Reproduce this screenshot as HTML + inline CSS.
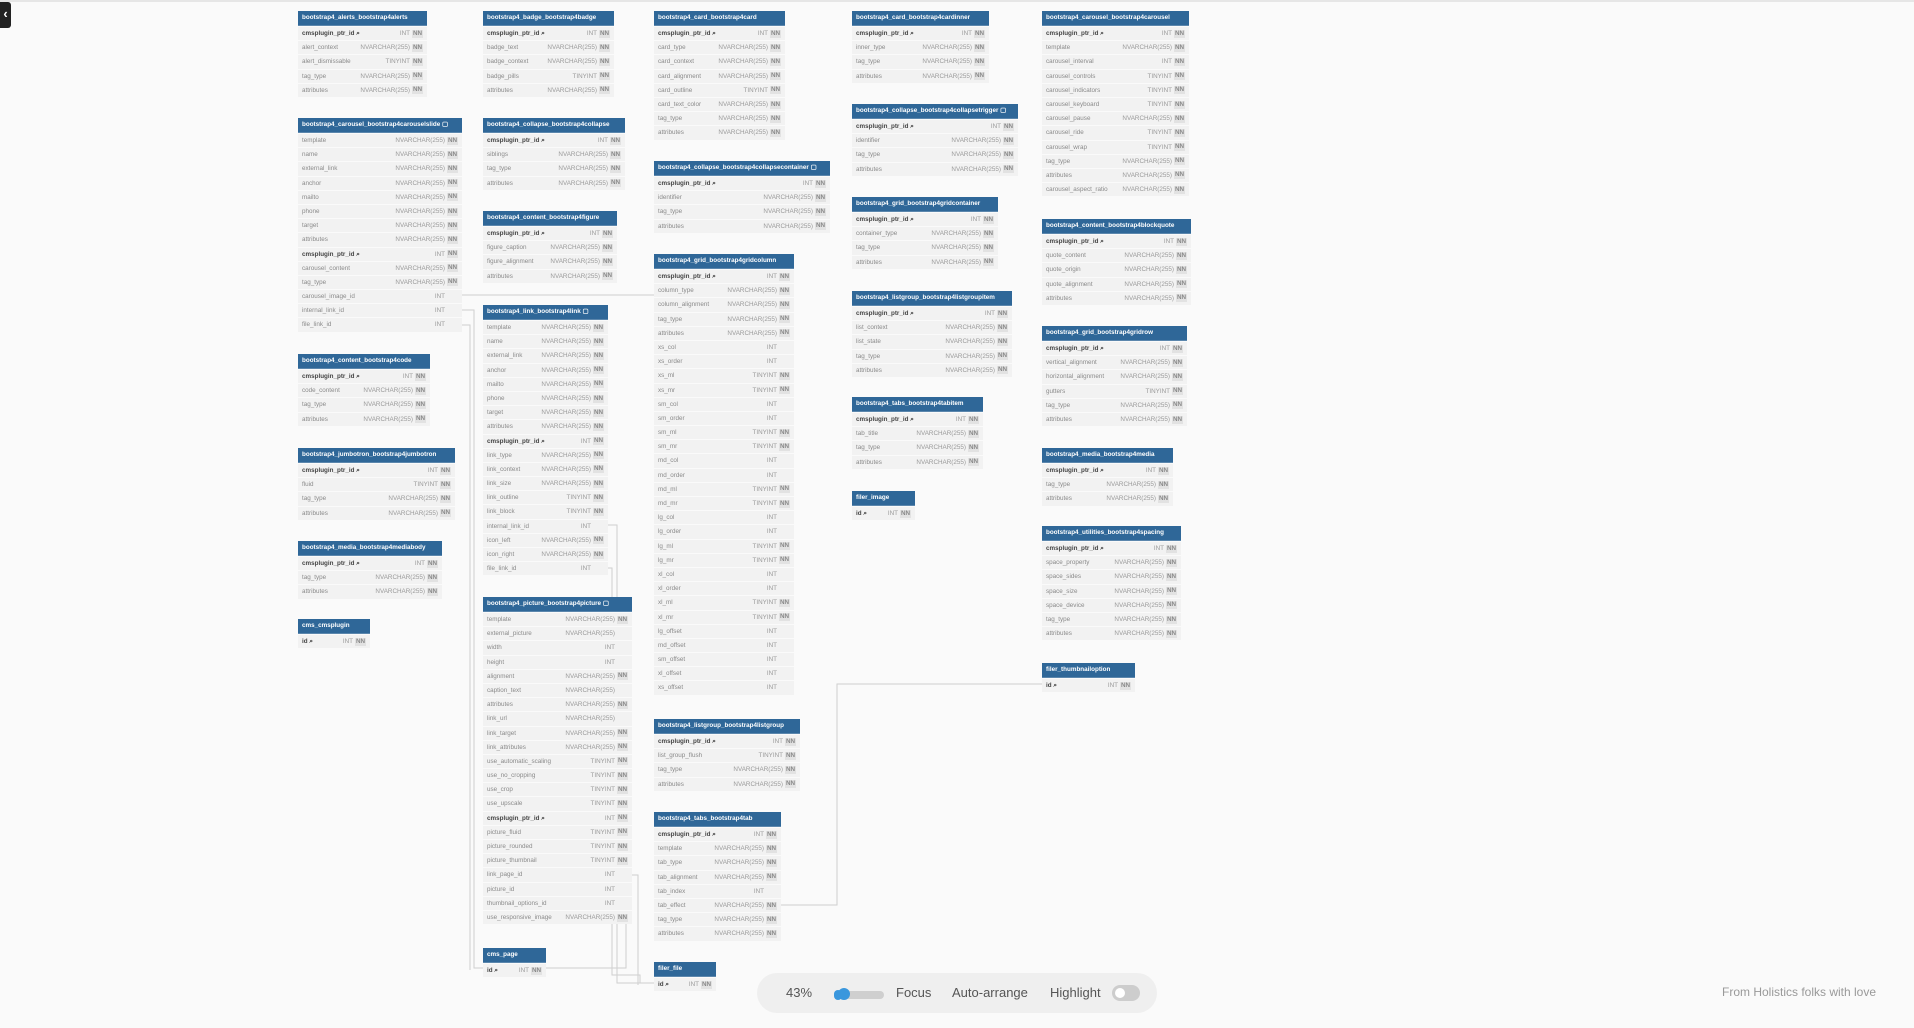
<!DOCTYPE html>
<html><head><meta charset="utf-8"><style>
body{margin:0;width:1914px;height:1028px;background:#fafafa;position:relative;overflow:hidden;font-family:"Liberation Sans",sans-serif}
.t{position:absolute;background:#f2f2f2;font-size:6.3px;color:#8a8a8a}
.h{background:#2f6798;color:#fff;font-weight:bold;height:14px;line-height:14px;padding-left:4px;white-space:nowrap;overflow:hidden;border-bottom:1px solid #5c87ad}
.r{height:13.2px;line-height:13.2px;border-top:1px solid #fafafa;display:flex;padding:0 4px;white-space:nowrap}
.r i{font-style:normal;flex:1}
.r b{font-weight:normal;color:#999}
.r s{text-decoration:none;background:#e2e2e2;color:#888;margin-left:2px;padding:0 1px;font-weight:bold;width:9px;text-align:center;height:8px;line-height:8px;align-self:center}
.r s.e{background:none}
.k i{color:#444;font-weight:bold}
.bar{position:absolute;left:757px;top:973px;width:400px;height:40px;background:#efefef;border-radius:20px;font-size:13px;color:#555}
.bar span{position:absolute;top:12px}
</style></head><body>
<div style="position:absolute;left:0;top:0;width:1914px;height:2px;background:#e6e6e6"></div>
<svg style="position:absolute;left:0;top:0" width="1914" height="1028"><g fill="none" stroke="#cfcfcf" stroke-width="1">
<polyline points="781,905 837,905 837,684 1042,684"/>
<polyline points="461,295 654,295"/>
<polyline points="462,310 474,310 474,968 483,968"/>
<polyline points="462,325 470,325 470,970"/>
<polyline points="608,525 617,525 617,983 654,983"/>
<polyline points="608,568 612,568 612,975 640,975 640,983"/>
<polyline points="632,875 638,875 638,985"/>
<polyline points="632,904 626,904 626,968 546,968"/>
</g></svg>
<div style="position:absolute;left:0;top:2px;width:11px;height:26px;background:#222;border-radius:0 3px 3px 0;color:#fff;font-size:13px;font-weight:bold;line-height:24px;text-align:center">‹</div>

<!-- col1 -->
<div class="t" style="left:298px;top:11px;width:129px"><div class="h">bootstrap4_alerts_bootstrap4alerts</div>
<div class="r k"><i>cmsplugin_ptr_id ⌕</i><b>INT</b><s>NN</s></div>
<div class="r"><i>alert_context</i><b>NVARCHAR(255)</b><s>NN</s></div>
<div class="r"><i>alert_dismissable</i><b>TINYINT</b><s>NN</s></div>
<div class="r"><i>tag_type</i><b>NVARCHAR(255)</b><s>NN</s></div>
<div class="r"><i>attributes</i><b>NVARCHAR(255)</b><s>NN</s></div></div>

<div class="t" style="left:298px;top:118px;width:164px"><div class="h">bootstrap4_carousel_bootstrap4carouselslide ▢</div>
<div class="r"><i>template</i><b>NVARCHAR(255)</b><s>NN</s></div>
<div class="r"><i>name</i><b>NVARCHAR(255)</b><s>NN</s></div>
<div class="r"><i>external_link</i><b>NVARCHAR(255)</b><s>NN</s></div>
<div class="r"><i>anchor</i><b>NVARCHAR(255)</b><s>NN</s></div>
<div class="r"><i>mailto</i><b>NVARCHAR(255)</b><s>NN</s></div>
<div class="r"><i>phone</i><b>NVARCHAR(255)</b><s>NN</s></div>
<div class="r"><i>target</i><b>NVARCHAR(255)</b><s>NN</s></div>
<div class="r"><i>attributes</i><b>NVARCHAR(255)</b><s>NN</s></div>
<div class="r k"><i>cmsplugin_ptr_id ⌕</i><b>INT</b><s>NN</s></div>
<div class="r"><i>carousel_content</i><b>NVARCHAR(255)</b><s>NN</s></div>
<div class="r"><i>tag_type</i><b>NVARCHAR(255)</b><s>NN</s></div>
<div class="r"><i>carousel_image_id</i><b>INT</b><s class="e"></s></div>
<div class="r"><i>internal_link_id</i><b>INT</b><s class="e"></s></div>
<div class="r"><i>file_link_id</i><b>INT</b><s class="e"></s></div></div>

<div class="t" style="left:298px;top:354px;width:132px"><div class="h">bootstrap4_content_bootstrap4code</div>
<div class="r k"><i>cmsplugin_ptr_id ⌕</i><b>INT</b><s>NN</s></div>
<div class="r"><i>code_content</i><b>NVARCHAR(255)</b><s>NN</s></div>
<div class="r"><i>tag_type</i><b>NVARCHAR(255)</b><s>NN</s></div>
<div class="r"><i>attributes</i><b>NVARCHAR(255)</b><s>NN</s></div></div>

<div class="t" style="left:298px;top:448px;width:157px"><div class="h">bootstrap4_jumbotron_bootstrap4jumbotron</div>
<div class="r k"><i>cmsplugin_ptr_id ⌕</i><b>INT</b><s>NN</s></div>
<div class="r"><i>fluid</i><b>TINYINT</b><s>NN</s></div>
<div class="r"><i>tag_type</i><b>NVARCHAR(255)</b><s>NN</s></div>
<div class="r"><i>attributes</i><b>NVARCHAR(255)</b><s>NN</s></div></div>

<div class="t" style="left:298px;top:541px;width:144px"><div class="h">bootstrap4_media_bootstrap4mediabody</div>
<div class="r k"><i>cmsplugin_ptr_id ⌕</i><b>INT</b><s>NN</s></div>
<div class="r"><i>tag_type</i><b>NVARCHAR(255)</b><s>NN</s></div>
<div class="r"><i>attributes</i><b>NVARCHAR(255)</b><s>NN</s></div></div>

<div class="t" style="left:298px;top:619px;width:72px"><div class="h">cms_cmsplugin</div>
<div class="r k"><i>id ⌕</i><b>INT</b><s>NN</s></div></div>

<!-- col2 -->
<div class="t" style="left:483px;top:11px;width:131px"><div class="h">bootstrap4_badge_bootstrap4badge</div>
<div class="r k"><i>cmsplugin_ptr_id ⌕</i><b>INT</b><s>NN</s></div>
<div class="r"><i>badge_text</i><b>NVARCHAR(255)</b><s>NN</s></div>
<div class="r"><i>badge_context</i><b>NVARCHAR(255)</b><s>NN</s></div>
<div class="r"><i>badge_pills</i><b>TINYINT</b><s>NN</s></div>
<div class="r"><i>attributes</i><b>NVARCHAR(255)</b><s>NN</s></div></div>

<div class="t" style="left:483px;top:118px;width:142px"><div class="h">bootstrap4_collapse_bootstrap4collapse</div>
<div class="r k"><i>cmsplugin_ptr_id ⌕</i><b>INT</b><s>NN</s></div>
<div class="r"><i>siblings</i><b>NVARCHAR(255)</b><s>NN</s></div>
<div class="r"><i>tag_type</i><b>NVARCHAR(255)</b><s>NN</s></div>
<div class="r"><i>attributes</i><b>NVARCHAR(255)</b><s>NN</s></div></div>

<div class="t" style="left:483px;top:211px;width:134px"><div class="h">bootstrap4_content_bootstrap4figure</div>
<div class="r k"><i>cmsplugin_ptr_id ⌕</i><b>INT</b><s>NN</s></div>
<div class="r"><i>figure_caption</i><b>NVARCHAR(255)</b><s>NN</s></div>
<div class="r"><i>figure_alignment</i><b>NVARCHAR(255)</b><s>NN</s></div>
<div class="r"><i>attributes</i><b>NVARCHAR(255)</b><s>NN</s></div></div>

<div class="t" style="left:483px;top:305px;width:125px"><div class="h">bootstrap4_link_bootstrap4link ▢</div>
<div class="r"><i>template</i><b>NVARCHAR(255)</b><s>NN</s></div>
<div class="r"><i>name</i><b>NVARCHAR(255)</b><s>NN</s></div>
<div class="r"><i>external_link</i><b>NVARCHAR(255)</b><s>NN</s></div>
<div class="r"><i>anchor</i><b>NVARCHAR(255)</b><s>NN</s></div>
<div class="r"><i>mailto</i><b>NVARCHAR(255)</b><s>NN</s></div>
<div class="r"><i>phone</i><b>NVARCHAR(255)</b><s>NN</s></div>
<div class="r"><i>target</i><b>NVARCHAR(255)</b><s>NN</s></div>
<div class="r"><i>attributes</i><b>NVARCHAR(255)</b><s>NN</s></div>
<div class="r k"><i>cmsplugin_ptr_id ⌕</i><b>INT</b><s>NN</s></div>
<div class="r"><i>link_type</i><b>NVARCHAR(255)</b><s>NN</s></div>
<div class="r"><i>link_context</i><b>NVARCHAR(255)</b><s>NN</s></div>
<div class="r"><i>link_size</i><b>NVARCHAR(255)</b><s>NN</s></div>
<div class="r"><i>link_outline</i><b>TINYINT</b><s>NN</s></div>
<div class="r"><i>link_block</i><b>TINYINT</b><s>NN</s></div>
<div class="r"><i>internal_link_id</i><b>INT</b><s class="e"></s></div>
<div class="r"><i>icon_left</i><b>NVARCHAR(255)</b><s>NN</s></div>
<div class="r"><i>icon_right</i><b>NVARCHAR(255)</b><s>NN</s></div>
<div class="r"><i>file_link_id</i><b>INT</b><s class="e"></s></div></div>

<div class="t" style="left:483px;top:597px;width:149px"><div class="h">bootstrap4_picture_bootstrap4picture ▢</div>
<div class="r"><i>template</i><b>NVARCHAR(255)</b><s>NN</s></div>
<div class="r"><i>external_picture</i><b>NVARCHAR(255)</b><s class="e"></s></div>
<div class="r"><i>width</i><b>INT</b><s class="e"></s></div>
<div class="r"><i>height</i><b>INT</b><s class="e"></s></div>
<div class="r"><i>alignment</i><b>NVARCHAR(255)</b><s>NN</s></div>
<div class="r"><i>caption_text</i><b>NVARCHAR(255)</b><s class="e"></s></div>
<div class="r"><i>attributes</i><b>NVARCHAR(255)</b><s>NN</s></div>
<div class="r"><i>link_url</i><b>NVARCHAR(255)</b><s class="e"></s></div>
<div class="r"><i>link_target</i><b>NVARCHAR(255)</b><s>NN</s></div>
<div class="r"><i>link_attributes</i><b>NVARCHAR(255)</b><s>NN</s></div>
<div class="r"><i>use_automatic_scaling</i><b>TINYINT</b><s>NN</s></div>
<div class="r"><i>use_no_cropping</i><b>TINYINT</b><s>NN</s></div>
<div class="r"><i>use_crop</i><b>TINYINT</b><s>NN</s></div>
<div class="r"><i>use_upscale</i><b>TINYINT</b><s>NN</s></div>
<div class="r k"><i>cmsplugin_ptr_id ⌕</i><b>INT</b><s>NN</s></div>
<div class="r"><i>picture_fluid</i><b>TINYINT</b><s>NN</s></div>
<div class="r"><i>picture_rounded</i><b>TINYINT</b><s>NN</s></div>
<div class="r"><i>picture_thumbnail</i><b>TINYINT</b><s>NN</s></div>
<div class="r"><i>link_page_id</i><b>INT</b><s class="e"></s></div>
<div class="r"><i>picture_id</i><b>INT</b><s class="e"></s></div>
<div class="r"><i>thumbnail_options_id</i><b>INT</b><s class="e"></s></div>
<div class="r"><i>use_responsive_image</i><b>NVARCHAR(255)</b><s>NN</s></div></div>

<div class="t" style="left:483px;top:948px;width:63px"><div class="h">cms_page</div>
<div class="r k"><i>id ⌕</i><b>INT</b><s>NN</s></div></div>

<!-- col3 -->
<div class="t" style="left:654px;top:11px;width:131px"><div class="h">bootstrap4_card_bootstrap4card</div>
<div class="r k"><i>cmsplugin_ptr_id ⌕</i><b>INT</b><s>NN</s></div>
<div class="r"><i>card_type</i><b>NVARCHAR(255)</b><s>NN</s></div>
<div class="r"><i>card_context</i><b>NVARCHAR(255)</b><s>NN</s></div>
<div class="r"><i>card_alignment</i><b>NVARCHAR(255)</b><s>NN</s></div>
<div class="r"><i>card_outline</i><b>TINYINT</b><s>NN</s></div>
<div class="r"><i>card_text_color</i><b>NVARCHAR(255)</b><s>NN</s></div>
<div class="r"><i>tag_type</i><b>NVARCHAR(255)</b><s>NN</s></div>
<div class="r"><i>attributes</i><b>NVARCHAR(255)</b><s>NN</s></div></div>

<div class="t" style="left:654px;top:161px;width:176px"><div class="h">bootstrap4_collapse_bootstrap4collapsecontainer ▢</div>
<div class="r k"><i>cmsplugin_ptr_id ⌕</i><b>INT</b><s>NN</s></div>
<div class="r"><i>identifier</i><b>NVARCHAR(255)</b><s>NN</s></div>
<div class="r"><i>tag_type</i><b>NVARCHAR(255)</b><s>NN</s></div>
<div class="r"><i>attributes</i><b>NVARCHAR(255)</b><s>NN</s></div></div>

<div class="t" style="left:654px;top:254px;width:140px"><div class="h">bootstrap4_grid_bootstrap4gridcolumn</div>
<div class="r k"><i>cmsplugin_ptr_id ⌕</i><b>INT</b><s>NN</s></div>
<div class="r"><i>column_type</i><b>NVARCHAR(255)</b><s>NN</s></div>
<div class="r"><i>column_alignment</i><b>NVARCHAR(255)</b><s>NN</s></div>
<div class="r"><i>tag_type</i><b>NVARCHAR(255)</b><s>NN</s></div>
<div class="r"><i>attributes</i><b>NVARCHAR(255)</b><s>NN</s></div>
<div class="r"><i>xs_col</i><b>INT</b><s class="e"></s></div>
<div class="r"><i>xs_order</i><b>INT</b><s class="e"></s></div>
<div class="r"><i>xs_ml</i><b>TINYINT</b><s>NN</s></div>
<div class="r"><i>xs_mr</i><b>TINYINT</b><s>NN</s></div>
<div class="r"><i>sm_col</i><b>INT</b><s class="e"></s></div>
<div class="r"><i>sm_order</i><b>INT</b><s class="e"></s></div>
<div class="r"><i>sm_ml</i><b>TINYINT</b><s>NN</s></div>
<div class="r"><i>sm_mr</i><b>TINYINT</b><s>NN</s></div>
<div class="r"><i>md_col</i><b>INT</b><s class="e"></s></div>
<div class="r"><i>md_order</i><b>INT</b><s class="e"></s></div>
<div class="r"><i>md_ml</i><b>TINYINT</b><s>NN</s></div>
<div class="r"><i>md_mr</i><b>TINYINT</b><s>NN</s></div>
<div class="r"><i>lg_col</i><b>INT</b><s class="e"></s></div>
<div class="r"><i>lg_order</i><b>INT</b><s class="e"></s></div>
<div class="r"><i>lg_ml</i><b>TINYINT</b><s>NN</s></div>
<div class="r"><i>lg_mr</i><b>TINYINT</b><s>NN</s></div>
<div class="r"><i>xl_col</i><b>INT</b><s class="e"></s></div>
<div class="r"><i>xl_order</i><b>INT</b><s class="e"></s></div>
<div class="r"><i>xl_ml</i><b>TINYINT</b><s>NN</s></div>
<div class="r"><i>xl_mr</i><b>TINYINT</b><s>NN</s></div>
<div class="r"><i>lg_offset</i><b>INT</b><s class="e"></s></div>
<div class="r"><i>md_offset</i><b>INT</b><s class="e"></s></div>
<div class="r"><i>sm_offset</i><b>INT</b><s class="e"></s></div>
<div class="r"><i>xl_offset</i><b>INT</b><s class="e"></s></div>
<div class="r"><i>xs_offset</i><b>INT</b><s class="e"></s></div></div>

<div class="t" style="left:654px;top:719px;width:146px"><div class="h">bootstrap4_listgroup_bootstrap4listgroup</div>
<div class="r k"><i>cmsplugin_ptr_id ⌕</i><b>INT</b><s>NN</s></div>
<div class="r"><i>list_group_flush</i><b>TINYINT</b><s>NN</s></div>
<div class="r"><i>tag_type</i><b>NVARCHAR(255)</b><s>NN</s></div>
<div class="r"><i>attributes</i><b>NVARCHAR(255)</b><s>NN</s></div></div>

<div class="t" style="left:654px;top:812px;width:127px"><div class="h">bootstrap4_tabs_bootstrap4tab</div>
<div class="r k"><i>cmsplugin_ptr_id ⌕</i><b>INT</b><s>NN</s></div>
<div class="r"><i>template</i><b>NVARCHAR(255)</b><s>NN</s></div>
<div class="r"><i>tab_type</i><b>NVARCHAR(255)</b><s>NN</s></div>
<div class="r"><i>tab_alignment</i><b>NVARCHAR(255)</b><s>NN</s></div>
<div class="r"><i>tab_index</i><b>INT</b><s class="e"></s></div>
<div class="r"><i>tab_effect</i><b>NVARCHAR(255)</b><s>NN</s></div>
<div class="r"><i>tag_type</i><b>NVARCHAR(255)</b><s>NN</s></div>
<div class="r"><i>attributes</i><b>NVARCHAR(255)</b><s>NN</s></div></div>

<div class="t" style="left:654px;top:962px;width:62px"><div class="h">filer_file</div>
<div class="r k"><i>id ⌕</i><b>INT</b><s>NN</s></div></div>

<!-- col4 -->
<div class="t" style="left:852px;top:11px;width:137px"><div class="h">bootstrap4_card_bootstrap4cardinner</div>
<div class="r k"><i>cmsplugin_ptr_id ⌕</i><b>INT</b><s>NN</s></div>
<div class="r"><i>inner_type</i><b>NVARCHAR(255)</b><s>NN</s></div>
<div class="r"><i>tag_type</i><b>NVARCHAR(255)</b><s>NN</s></div>
<div class="r"><i>attributes</i><b>NVARCHAR(255)</b><s>NN</s></div></div>

<div class="t" style="left:852px;top:104px;width:166px"><div class="h">bootstrap4_collapse_bootstrap4collapsetrigger ▢</div>
<div class="r k"><i>cmsplugin_ptr_id ⌕</i><b>INT</b><s>NN</s></div>
<div class="r"><i>identifier</i><b>NVARCHAR(255)</b><s>NN</s></div>
<div class="r"><i>tag_type</i><b>NVARCHAR(255)</b><s>NN</s></div>
<div class="r"><i>attributes</i><b>NVARCHAR(255)</b><s>NN</s></div></div>

<div class="t" style="left:852px;top:197px;width:146px"><div class="h">bootstrap4_grid_bootstrap4gridcontainer</div>
<div class="r k"><i>cmsplugin_ptr_id ⌕</i><b>INT</b><s>NN</s></div>
<div class="r"><i>container_type</i><b>NVARCHAR(255)</b><s>NN</s></div>
<div class="r"><i>tag_type</i><b>NVARCHAR(255)</b><s>NN</s></div>
<div class="r"><i>attributes</i><b>NVARCHAR(255)</b><s>NN</s></div></div>

<div class="t" style="left:852px;top:291px;width:160px"><div class="h">bootstrap4_listgroup_bootstrap4listgroupitem</div>
<div class="r k"><i>cmsplugin_ptr_id ⌕</i><b>INT</b><s>NN</s></div>
<div class="r"><i>list_context</i><b>NVARCHAR(255)</b><s>NN</s></div>
<div class="r"><i>list_state</i><b>NVARCHAR(255)</b><s>NN</s></div>
<div class="r"><i>tag_type</i><b>NVARCHAR(255)</b><s>NN</s></div>
<div class="r"><i>attributes</i><b>NVARCHAR(255)</b><s>NN</s></div></div>

<div class="t" style="left:852px;top:397px;width:131px"><div class="h">bootstrap4_tabs_bootstrap4tabitem</div>
<div class="r k"><i>cmsplugin_ptr_id ⌕</i><b>INT</b><s>NN</s></div>
<div class="r"><i>tab_title</i><b>NVARCHAR(255)</b><s>NN</s></div>
<div class="r"><i>tag_type</i><b>NVARCHAR(255)</b><s>NN</s></div>
<div class="r"><i>attributes</i><b>NVARCHAR(255)</b><s>NN</s></div></div>

<div class="t" style="left:852px;top:491px;width:63px"><div class="h">filer_image</div>
<div class="r k"><i>id ⌕</i><b>INT</b><s>NN</s></div></div>

<!-- col5 -->
<div class="t" style="left:1042px;top:11px;width:147px"><div class="h">bootstrap4_carousel_bootstrap4carousel</div>
<div class="r k"><i>cmsplugin_ptr_id ⌕</i><b>INT</b><s>NN</s></div>
<div class="r"><i>template</i><b>NVARCHAR(255)</b><s>NN</s></div>
<div class="r"><i>carousel_interval</i><b>INT</b><s>NN</s></div>
<div class="r"><i>carousel_controls</i><b>TINYINT</b><s>NN</s></div>
<div class="r"><i>carousel_indicators</i><b>TINYINT</b><s>NN</s></div>
<div class="r"><i>carousel_keyboard</i><b>TINYINT</b><s>NN</s></div>
<div class="r"><i>carousel_pause</i><b>NVARCHAR(255)</b><s>NN</s></div>
<div class="r"><i>carousel_ride</i><b>TINYINT</b><s>NN</s></div>
<div class="r"><i>carousel_wrap</i><b>TINYINT</b><s>NN</s></div>
<div class="r"><i>tag_type</i><b>NVARCHAR(255)</b><s>NN</s></div>
<div class="r"><i>attributes</i><b>NVARCHAR(255)</b><s>NN</s></div>
<div class="r"><i>carousel_aspect_ratio</i><b>NVARCHAR(255)</b><s>NN</s></div></div>

<div class="t" style="left:1042px;top:219px;width:149px"><div class="h">bootstrap4_content_bootstrap4blockquote</div>
<div class="r k"><i>cmsplugin_ptr_id ⌕</i><b>INT</b><s>NN</s></div>
<div class="r"><i>quote_content</i><b>NVARCHAR(255)</b><s>NN</s></div>
<div class="r"><i>quote_origin</i><b>NVARCHAR(255)</b><s>NN</s></div>
<div class="r"><i>quote_alignment</i><b>NVARCHAR(255)</b><s>NN</s></div>
<div class="r"><i>attributes</i><b>NVARCHAR(255)</b><s>NN</s></div></div>

<div class="t" style="left:1042px;top:326px;width:145px"><div class="h">bootstrap4_grid_bootstrap4gridrow</div>
<div class="r k"><i>cmsplugin_ptr_id ⌕</i><b>INT</b><s>NN</s></div>
<div class="r"><i>vertical_alignment</i><b>NVARCHAR(255)</b><s>NN</s></div>
<div class="r"><i>horizontal_alignment</i><b>NVARCHAR(255)</b><s>NN</s></div>
<div class="r"><i>gutters</i><b>TINYINT</b><s>NN</s></div>
<div class="r"><i>tag_type</i><b>NVARCHAR(255)</b><s>NN</s></div>
<div class="r"><i>attributes</i><b>NVARCHAR(255)</b><s>NN</s></div></div>

<div class="t" style="left:1042px;top:448px;width:131px"><div class="h">bootstrap4_media_bootstrap4media</div>
<div class="r k"><i>cmsplugin_ptr_id ⌕</i><b>INT</b><s>NN</s></div>
<div class="r"><i>tag_type</i><b>NVARCHAR(255)</b><s>NN</s></div>
<div class="r"><i>attributes</i><b>NVARCHAR(255)</b><s>NN</s></div></div>

<div class="t" style="left:1042px;top:526px;width:139px"><div class="h">bootstrap4_utilities_bootstrap4spacing</div>
<div class="r k"><i>cmsplugin_ptr_id ⌕</i><b>INT</b><s>NN</s></div>
<div class="r"><i>space_property</i><b>NVARCHAR(255)</b><s>NN</s></div>
<div class="r"><i>space_sides</i><b>NVARCHAR(255)</b><s>NN</s></div>
<div class="r"><i>space_size</i><b>NVARCHAR(255)</b><s>NN</s></div>
<div class="r"><i>space_device</i><b>NVARCHAR(255)</b><s>NN</s></div>
<div class="r"><i>tag_type</i><b>NVARCHAR(255)</b><s>NN</s></div>
<div class="r"><i>attributes</i><b>NVARCHAR(255)</b><s>NN</s></div></div>

<div class="t" style="left:1042px;top:663px;width:93px"><div class="h">filer_thumbnailoption</div>
<div class="r k"><i>id ⌕</i><b>INT</b><s>NN</s></div></div>

<!-- toolbar -->
<div class="bar">
<span style="left:29px">43%</span>
<div style="position:absolute;left:77px;top:18px;width:50px;height:8px;background:#cfcfcf;border-radius:4px"></div>
<div style="position:absolute;left:77px;top:17px;width:8px;height:10px;background:#3a97dd;border-radius:5px"></div>
<div style="position:absolute;left:81px;top:15px;width:12px;height:12px;background:#3a97dd;border-radius:50%"></div>
<span style="left:139px">Focus</span>
<span style="left:195px">Auto-arrange</span>
<span style="left:293px">Highlight</span>
<div style="position:absolute;left:355px;top:12px;width:28px;height:16px;background:#cdcdcd;border-radius:8px"></div>
<div style="position:absolute;left:358px;top:15px;width:10px;height:10px;background:#fff;border-radius:50%"></div>
</div>
<div style="position:absolute;left:1722px;top:985px;font-size:12px;color:#999">From Holistics folks with love</div>
</body></html>
